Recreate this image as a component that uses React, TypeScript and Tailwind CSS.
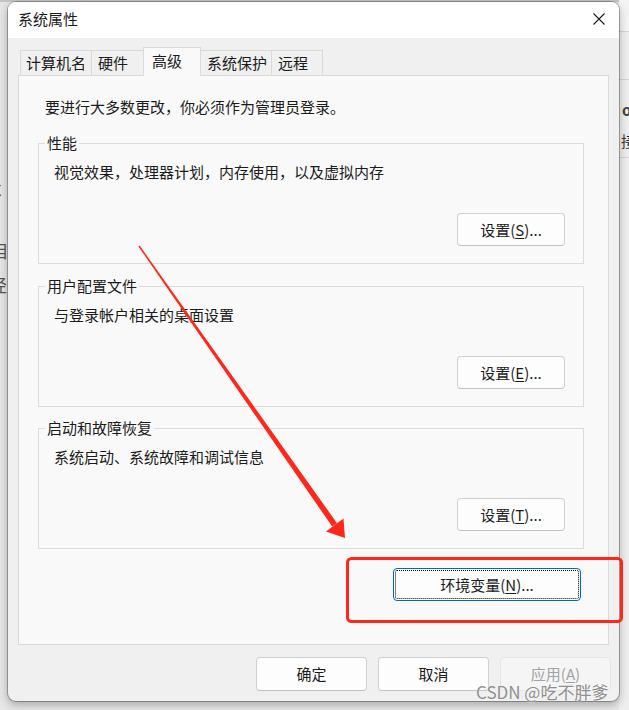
import React from "react";

function U({ children }: { children: React.ReactNode }) {
  return <span className="underline underline-offset-[2px] decoration-[1px]">{children}</span>;
}

function Btn({ children, className = "" }: { children: React.ReactNode; className?: string }) {
  return (
    <div
      className={
        "flex items-center justify-center rounded-[4px] border border-[#d0d0d0] border-b-[#c2c2c2] bg-[#fdfdfd] text-[15px] leading-[20px] text-[#1b1b1b] " +
        className
      }
    >
      {children}
    </div>
  );
}

function Group({
  title,
  desc,
  btn,
  className = "",
}: {
  title: string;
  desc: string;
  btn: React.ReactNode;
  className?: string;
}) {
  return (
    <fieldset className={"border border-[#dcdcdc] px-[6px] pb-[17px] " + className}>
      <legend className="px-[2px] leading-[20px]">{title}</legend>
      <div className="flex flex-col">
        <div className="pl-[9px] pt-[9px] leading-[20px]">{desc}</div>
        <div className="mt-[31px] flex justify-end pr-[12px]">
          <Btn className="h-[33px] w-[108px]">{btn}</Btn>
        </div>
      </div>
    </fieldset>
  );
}

export default function App() {
  return (
    <div className="relative h-[710px] w-[629px] overflow-hidden bg-[#e6e6e6] font-['Noto_Sans_CJK_SC','Noto_Sans',sans-serif] text-[#1b1b1b]">
      {/* background window bits (desktop behind dialog) */}
      <div className="absolute left-0 top-0 h-[2px] w-full bg-[#c4c4c4]" />
      <div className="absolute left-[-9px] top-[180px] text-[17px] leading-[20px] text-[#555]">C</div>
      <div className="absolute left-[-10px] top-[241px] text-[17px] leading-[20px] text-[#555]">相</div>
      <div className="absolute left-[-10px] top-[275px] text-[17px] leading-[20px] text-[#555]">径</div>
      <div className="absolute left-[619px] top-0 h-full w-[10px] bg-[#eeeeee]">
        <div className="h-[32px] border-b border-[#d4d4d4] bg-[#f4f4f4]" />
        <div className="h-[48px] border-b border-[#d4d4d4]" />
        <div className="h-[78px] border-b border-[#d4d4d4]" />
      </div>
      <div className="absolute left-[622px] top-[100px] text-[15px] font-bold leading-[20px] text-[#444]">o</div>
      <div className="absolute left-[621px] top-[131px] text-[15px] leading-[20px] text-[#333]">接</div>

      {/* dialog window */}
      <div className="absolute left-[8px] top-[2px] flex h-[699px] w-[611px] flex-col overflow-hidden rounded-[8px] bg-[#f0f0f0] shadow-[0_0_0_1px_rgba(0,0,0,0.28),0_3px_10px_rgba(0,0,0,0.3)]">
        {/* title bar */}
        <div className="flex h-[36px] shrink-0 items-center justify-between bg-white pb-[2px] pl-[10px] pr-[14px]">
          <span className="text-[15px] leading-[20px]">系统属性</span>
          <svg width="12" height="12" viewBox="0 0 12 12">
            <path d="M0.5 0.5 L11.5 11.5 M11.5 0.5 L0.5 11.5" stroke="#1b1b1b" strokeWidth="1.1" fill="none" />
          </svg>
        </div>

        {/* body */}
        <div className="flex flex-1 flex-col px-[10px] pt-[9px]">
          {/* tabs */}
          <div className="flex h-[28px] items-end pl-[2px] text-[15px] leading-[20px]">
            <div className="flex h-[25px] w-[72px] items-center border border-b-0 border-[#d9d9d9] bg-[#f0f0f0] pl-[5px]">计算机名</div>
            <div className="-ml-px flex h-[25px] w-[54px] items-center border border-b-0 border-[#d9d9d9] bg-[#f0f0f0] pl-[6px]">硬件</div>
            <div className="relative z-10 -mb-px -ml-[2px] h-[29px] w-[58px] border border-b-0 border-[#d9d9d9] bg-[#f9f9f9] pl-[8px] pt-[3px]">高级</div>
            <div className="-ml-[2px] flex h-[25px] w-[73px] items-center border border-b-0 border-[#d9d9d9] bg-[#f0f0f0] pl-[7px]">系统保护</div>
            <div className="-ml-px flex h-[25px] w-[52px] items-center border border-b-0 border-[#d9d9d9] bg-[#f0f0f0] pl-[6px]">远程</div>
          </div>

          {/* panel */}
          <div className="flex h-[570px] flex-col border border-[#d9d9d9] bg-[#f9f9f9] pl-[19px] pr-[24px] pt-[21px] text-[15px] leading-[20px]">
            <div className="ml-[7px]">要进行大多数更改，你必须作为管理员登录。</div>
            <Group
              className="mt-[16px]"
              title="性能"
              desc="视觉效果，处理器计划，内存使用，以及虚拟内存"
              btn={<>设置(<U>S</U>)...</>}
            />
            <Group
              className="mt-[12px]"
              title="用户配置文件"
              desc="与登录帐户相关的桌面设置"
              btn={<>设置(<U>E</U>)...</>}
            />
            <Group
              className="mt-[11px]"
              title="启动和故障恢复"
              desc="系统启动、系统故障和调试信息"
              btn={<>设置(<U>T</U>)...</>}
            />
            <div className="mr-[3px] mt-[19px] flex h-[33px] w-[188px] items-center justify-center self-end rounded-[4px] border border-[#0067c0] bg-[#fdfdfd] outline-[1px] outline-offset-[-3px] outline-dotted outline-black">
              环境变量(<U>N</U>)...
            </div>
          </div>

          {/* footer buttons */}
          <div className="-mr-[2px] mt-[12px] flex justify-end gap-[11px]">
            <Btn className="h-[34px] w-[111px]">确定</Btn>
            <Btn className="h-[34px] w-[111px]">取消</Btn>
            <div className="flex h-[34px] w-[111px] items-center justify-center rounded-[4px] border border-[#e5e5e5] bg-[#f5f5f5] text-[15px] leading-[20px] text-[#a0a3a8]">
              应用(<U>A</U>)
            </div>
          </div>
        </div>
      </div>

      {/* red annotation overlay */}
      <svg className="pointer-events-none absolute left-0 top-0" width="629" height="710" viewBox="0 0 629 710">
        <polygon
          points="139.6,245.6 138.4,246.4 332.2,526.6 337.0,523.2"
          fill="#ff2719"
        />
        <polygon points="326,531.5 343.5,518.5 345,538" fill="#ff2719" />
        <rect x="347.5" y="558.5" width="274" height="63" rx="4" ry="4" fill="none" stroke="#ff2719" strokeWidth="3" />
      </svg>

      {/* watermark */}
      <div className="absolute left-[476px] top-[682px] text-[17px] leading-[20px] text-[#8f8f8f] [text-shadow:0_0_2px_rgba(255,255,255,0.9)]">
        CSDN @吃不胖爹
      </div>
    </div>
  );
}
